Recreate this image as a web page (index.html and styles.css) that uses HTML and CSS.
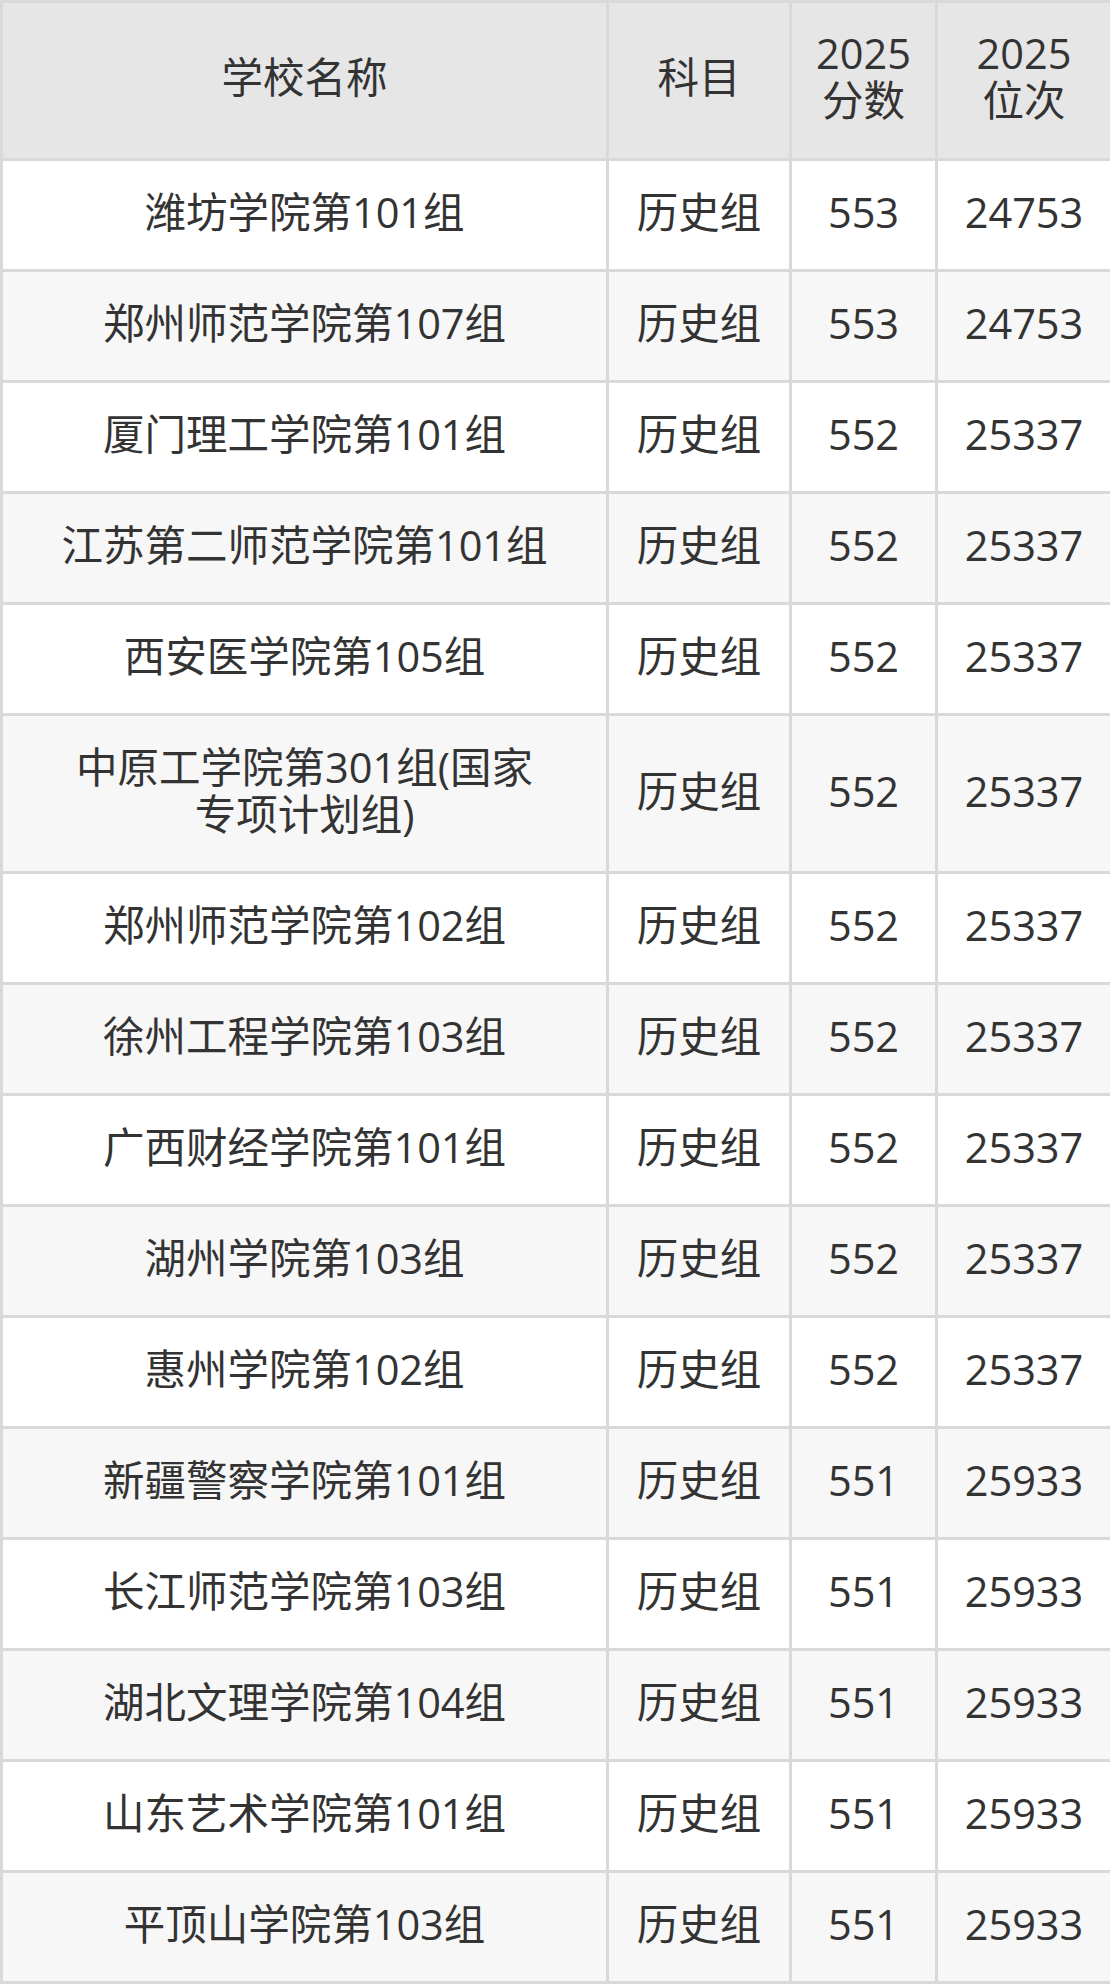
FILE: index.html
```html
<!DOCTYPE html>
<html lang="zh">
<head>
<meta charset="utf-8">
<title>分数位次</title>
<link rel="stylesheet" href="styles.css">
</head>
<body>
<table class="score-table">
  <colgroup>
    <col class="c-name">
    <col class="c-subj">
    <col class="c-score">
    <col class="c-rank">
  </colgroup>
  <thead>
    <tr><th>学校名称</th><th>科目</th><th>2025<br>分数</th><th>2025<br>位次</th></tr>
  </thead>
  <tbody>
    <tr><td>潍坊学院第101组</td><td>历史组</td><td>553</td><td>24753</td></tr>
    <tr><td>郑州师范学院第107组</td><td>历史组</td><td>553</td><td>24753</td></tr>
    <tr><td>厦门理工学院第101组</td><td>历史组</td><td>552</td><td>25337</td></tr>
    <tr><td>江苏第二师范学院第101组</td><td>历史组</td><td>552</td><td>25337</td></tr>
    <tr><td>西安医学院第105组</td><td>历史组</td><td>552</td><td>25337</td></tr>
    <tr><td>中原工学院第301组(国家<br>专项计划组)</td><td>历史组</td><td>552</td><td>25337</td></tr>
    <tr><td>郑州师范学院第102组</td><td>历史组</td><td>552</td><td>25337</td></tr>
    <tr><td>徐州工程学院第103组</td><td>历史组</td><td>552</td><td>25337</td></tr>
    <tr><td>广西财经学院第101组</td><td>历史组</td><td>552</td><td>25337</td></tr>
    <tr><td>湖州学院第103组</td><td>历史组</td><td>552</td><td>25337</td></tr>
    <tr><td>惠州学院第102组</td><td>历史组</td><td>552</td><td>25337</td></tr>
    <tr><td>新疆警察学院第101组</td><td>历史组</td><td>551</td><td>25933</td></tr>
    <tr><td>长江师范学院第103组</td><td>历史组</td><td>551</td><td>25933</td></tr>
    <tr><td>湖北文理学院第104组</td><td>历史组</td><td>551</td><td>25933</td></tr>
    <tr><td>山东艺术学院第101组</td><td>历史组</td><td>551</td><td>25933</td></tr>
    <tr><td>平顶山学院第103组</td><td>历史组</td><td>551</td><td>25933</td></tr>
  </tbody>
</table>
</body>
</html>
```
FILE: styles.css
```css
html, body {
  margin: 0;
  padding: 0;
  background: #ffffff;
}

.score-table {
  width: 1110px;
  border-collapse: collapse;
  table-layout: fixed;
  font-family: "Open Sans", "Noto Sans CJK SC", sans-serif;
  font-size: 41.5px;
  line-height: 47px;
  color: #333333;
}

.c-name { width: 606px; }
.c-subj { width: 183px; }
.c-score { width: 146px; }
.c-rank { width: 175px; }

.score-table th,
.score-table td {
  border: 3px solid #d9d9d9;
  padding: 28px 4px 33px;
  text-align: center;
  vertical-align: middle;
  font-weight: normal;
}

.score-table thead th {
  background: #e6e6e6;
  padding-top: 27px;
  padding-bottom: 34px;
}

.score-table tbody tr:nth-child(odd) td {
  background: #ffffff;
}

.score-table tbody tr:nth-child(even) td {
  background: #f7f7f7;
}
```
